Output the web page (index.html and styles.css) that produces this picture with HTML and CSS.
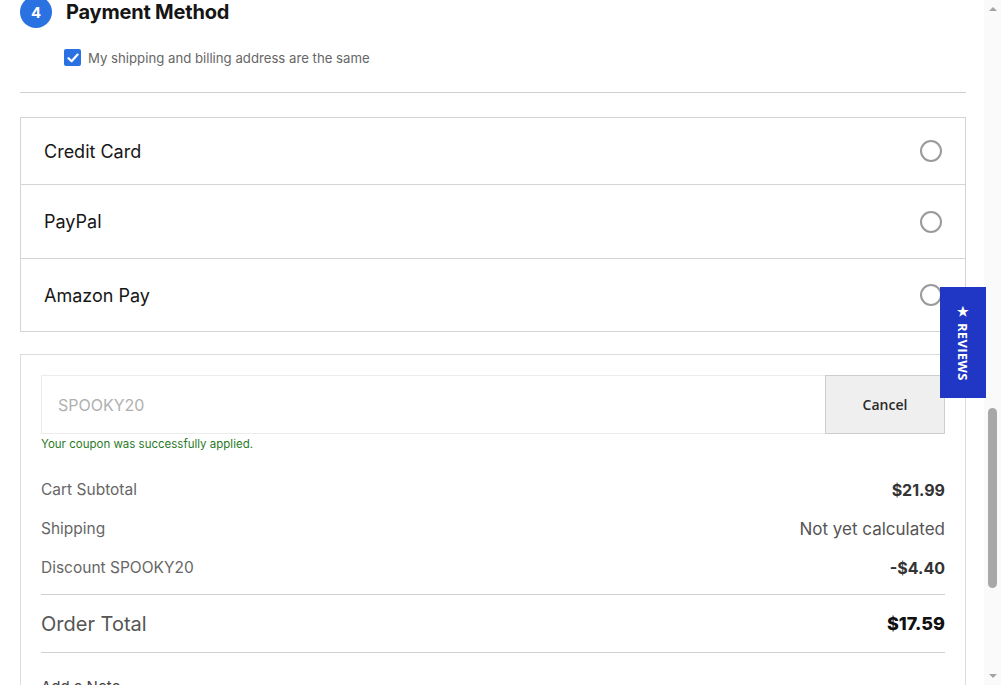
FILE: index.html
```html
<!DOCTYPE html>
<html lang="en">
<head>
    <meta charset="UTF-8">
    <meta name="viewport" content="width=device-width, initial-scale=1.0">
    <title>Checkout - Payment Method</title>
    <link rel="stylesheet" href="styles.css">
</head>
<body>
    <div class="page">
        <div class="content">
            <div class="step-header">
                <span class="step-number">4</span>
                <h2>Payment Method</h2>
            </div>

            <label class="same-address">
                <span class="checkbox">
                    <svg width="12" height="10" viewBox="0 0 12 10"><path d="M1.5 5.2 L4.6 8.2 L10.6 1.6" fill="none" stroke="#fff" stroke-width="2.2" stroke-linecap="round" stroke-linejoin="round"/></svg>
                </span>
                My shipping and billing address are the same
            </label>

            <hr class="divider">

            <div class="payment-options">
                <div class="option option-first">
                    <span>Credit Card</span>
                    <span class="radio"></span>
                </div>
                <div class="option">
                    <span>PayPal</span>
                    <span class="radio"></span>
                </div>
                <div class="option option-last">
                    <span>Amazon Pay</span>
                    <span class="radio"></span>
                </div>
            </div>

            <div class="summary">
                <div class="coupon">
                    <div class="coupon-input">SPOOKY20</div>
                    <button class="coupon-cancel" type="button">Cancel</button>
                </div>
                <p class="coupon-message">Your coupon was successfully applied.</p>

                <div class="summary-row">
                    <span class="label">Cart Subtotal</span>
                    <span class="value bold">$21.99</span>
                </div>
                <div class="summary-row">
                    <span class="label">Shipping</span>
                    <span class="value">Not yet calculated</span>
                </div>
                <div class="summary-row">
                    <span class="label">Discount SPOOKY20</span>
                    <span class="value bold">-$4.40</span>
                </div>

                <div class="total-row">
                    <span class="total-label">Order Total</span>
                    <span class="total-value">$17.59</span>
                </div>

                <div class="add-note">Add a Note ⌄</div>
            </div>
        </div>

        <!-- fake browser scrollbar -->
        <div class="scrollbar">
            <span class="arrow-up"></span>
            <span class="thumb"></span>
            <span class="arrow-down"></span>
        </div>
    </div>

    <a class="reviews-tab" href="#"><span>★ REVIEWS</span></a>
</body>
</html>
```

FILE: styles.css
```css
body {
    margin: 0;
    padding: 0;
    font-family: Inter, "Noto Sans", sans-serif;
    background-color: #fff;
    color: #111;
    overflow: hidden;
}

.page {
    display: flex;
    height: 685px;
    overflow: hidden;
}

.content {
    flex: 1;
    padding: 0 18px 0 20px;
}

/* Step header */
.step-header {
    display: flex;
    align-items: center;
    gap: 14px;
    margin-top: -4px;
}

.step-number {
    width: 32px;
    height: 32px;
    border-radius: 50%;
    background-color: #2a72e2;
    color: #fff;
    font-weight: 700;
    font-size: 15px;
    display: flex;
    align-items: center;
    justify-content: center;
}

.step-header h2 {
    margin: 0;
    font-size: 20px;
    font-weight: 700;
    letter-spacing: -0.2px;
    color: #151515;
}

.same-address {
    display: flex;
    align-items: center;
    gap: 7px;
    margin: 21px 0 0 44px;
    font-size: 13.2px;
    color: #666;
    height: 17px;
}

.checkbox {
    width: 17px;
    height: 17px;
    border-radius: 2px;
    background-color: #2a72e2;
    display: flex;
    align-items: center;
    justify-content: center;
}

.divider {
    border: none;
    border-top: 1px solid #cfcfcf;
    margin: 26px 0 0;
}

/* Payment options */
.payment-options {
    margin-top: 24px;
    border: 1px solid #d4d4d4;
}

.option {
    display: flex;
    align-items: center;
    justify-content: space-between;
    height: 73px;
    padding: 0 23px 0 23px;
    font-size: 18px;
    color: #161616;
    border-top: 1px solid #d4d4d4;
}

.option-first {
    height: 66px;
    border-top: none;
}

.option-last {
    height: 72px;
}

.radio {
    width: 18px;
    height: 18px;
    border: 2px solid #9a9a9a;
    border-radius: 50%;
}

/* Order summary */
.summary {
    margin-top: 22px;
    border: 1px solid #dcdcdc;
    border-bottom: none;
    padding: 20px 20px 0;
    height: 400px;
}

.coupon {
    display: flex;
    height: 59px;
}

.coupon-input {
    flex: 1;
    border: 1px solid #ececec;
    border-right: none;
    display: flex;
    align-items: center;
    padding-left: 16px;
    font-size: 16px;
    color: #b0b0b0;
}

.coupon-cancel {
    width: 120px;
    background-color: #efefef;
    border: 1px solid #cdcdcd;
    font-family: "Open Sans", sans-serif;
    font-size: 14px;
    font-weight: 600;
    color: #2a2a2a;
    cursor: pointer;
}

.coupon-message {
    margin: 3px 0 19px;
    font-size: 11.5px;
    color: #2b7a1f;
}

.summary-row {
    display: flex;
    justify-content: space-between;
    align-items: center;
    height: 39px;
}

.summary-row .label {
    font-size: 15.5px;
    color: #666;
}

.summary-row .value {
    font-size: 17px;
    color: #555;
}

.summary-row .bold {
    font-size: 16px;
    font-weight: 700;
    color: #333;
}

.total-row {
    display: flex;
    justify-content: space-between;
    align-items: center;
    height: 57px;
    margin-top: 7px;
    border-top: 1px solid #d0d0d0;
    border-bottom: 1px solid #d0d0d0;
}

.total-label {
    font-size: 20px;
    color: #555;
}

.total-value {
    font-size: 18px;
    font-weight: 800;
    color: #111;
}

.add-note {
    margin-top: 24px;
    font-size: 15px;
    color: #444;
}

/* Scrollbar */
.scrollbar {
    width: 17px;
    background-color: #fafafa;
    display: flex;
    flex-direction: column;
    align-items: center;
}

.arrow-up {
    margin-top: 7px;
    border-left: 4px solid transparent;
    border-right: 4px solid transparent;
    border-bottom: 4px solid #a3a3a3;
}

.thumb {
    width: 9px;
    height: 180px;
    margin-top: 397px;
    border-radius: 5px;
    background-color: #a8a8a8;
}

.arrow-down {
    margin-top: auto;
    margin-bottom: 7px;
    border-left: 4px solid transparent;
    border-right: 4px solid transparent;
    border-top: 4px solid #a3a3a3;
}

/* Reviews tab */
.reviews-tab {
    position: fixed;
    left: 940px;
    top: 287px;
    width: 46px;
    height: 111px;
    background-color: #1f37c4;
    color: #fff;
    text-decoration: none;
    display: flex;
    align-items: center;
    justify-content: center;
}

.reviews-tab span {
    writing-mode: vertical-rl;
    font-family: "Open Sans", sans-serif;
    font-size: 13px;
    font-weight: 700;
    letter-spacing: 0.3px;
}
```
